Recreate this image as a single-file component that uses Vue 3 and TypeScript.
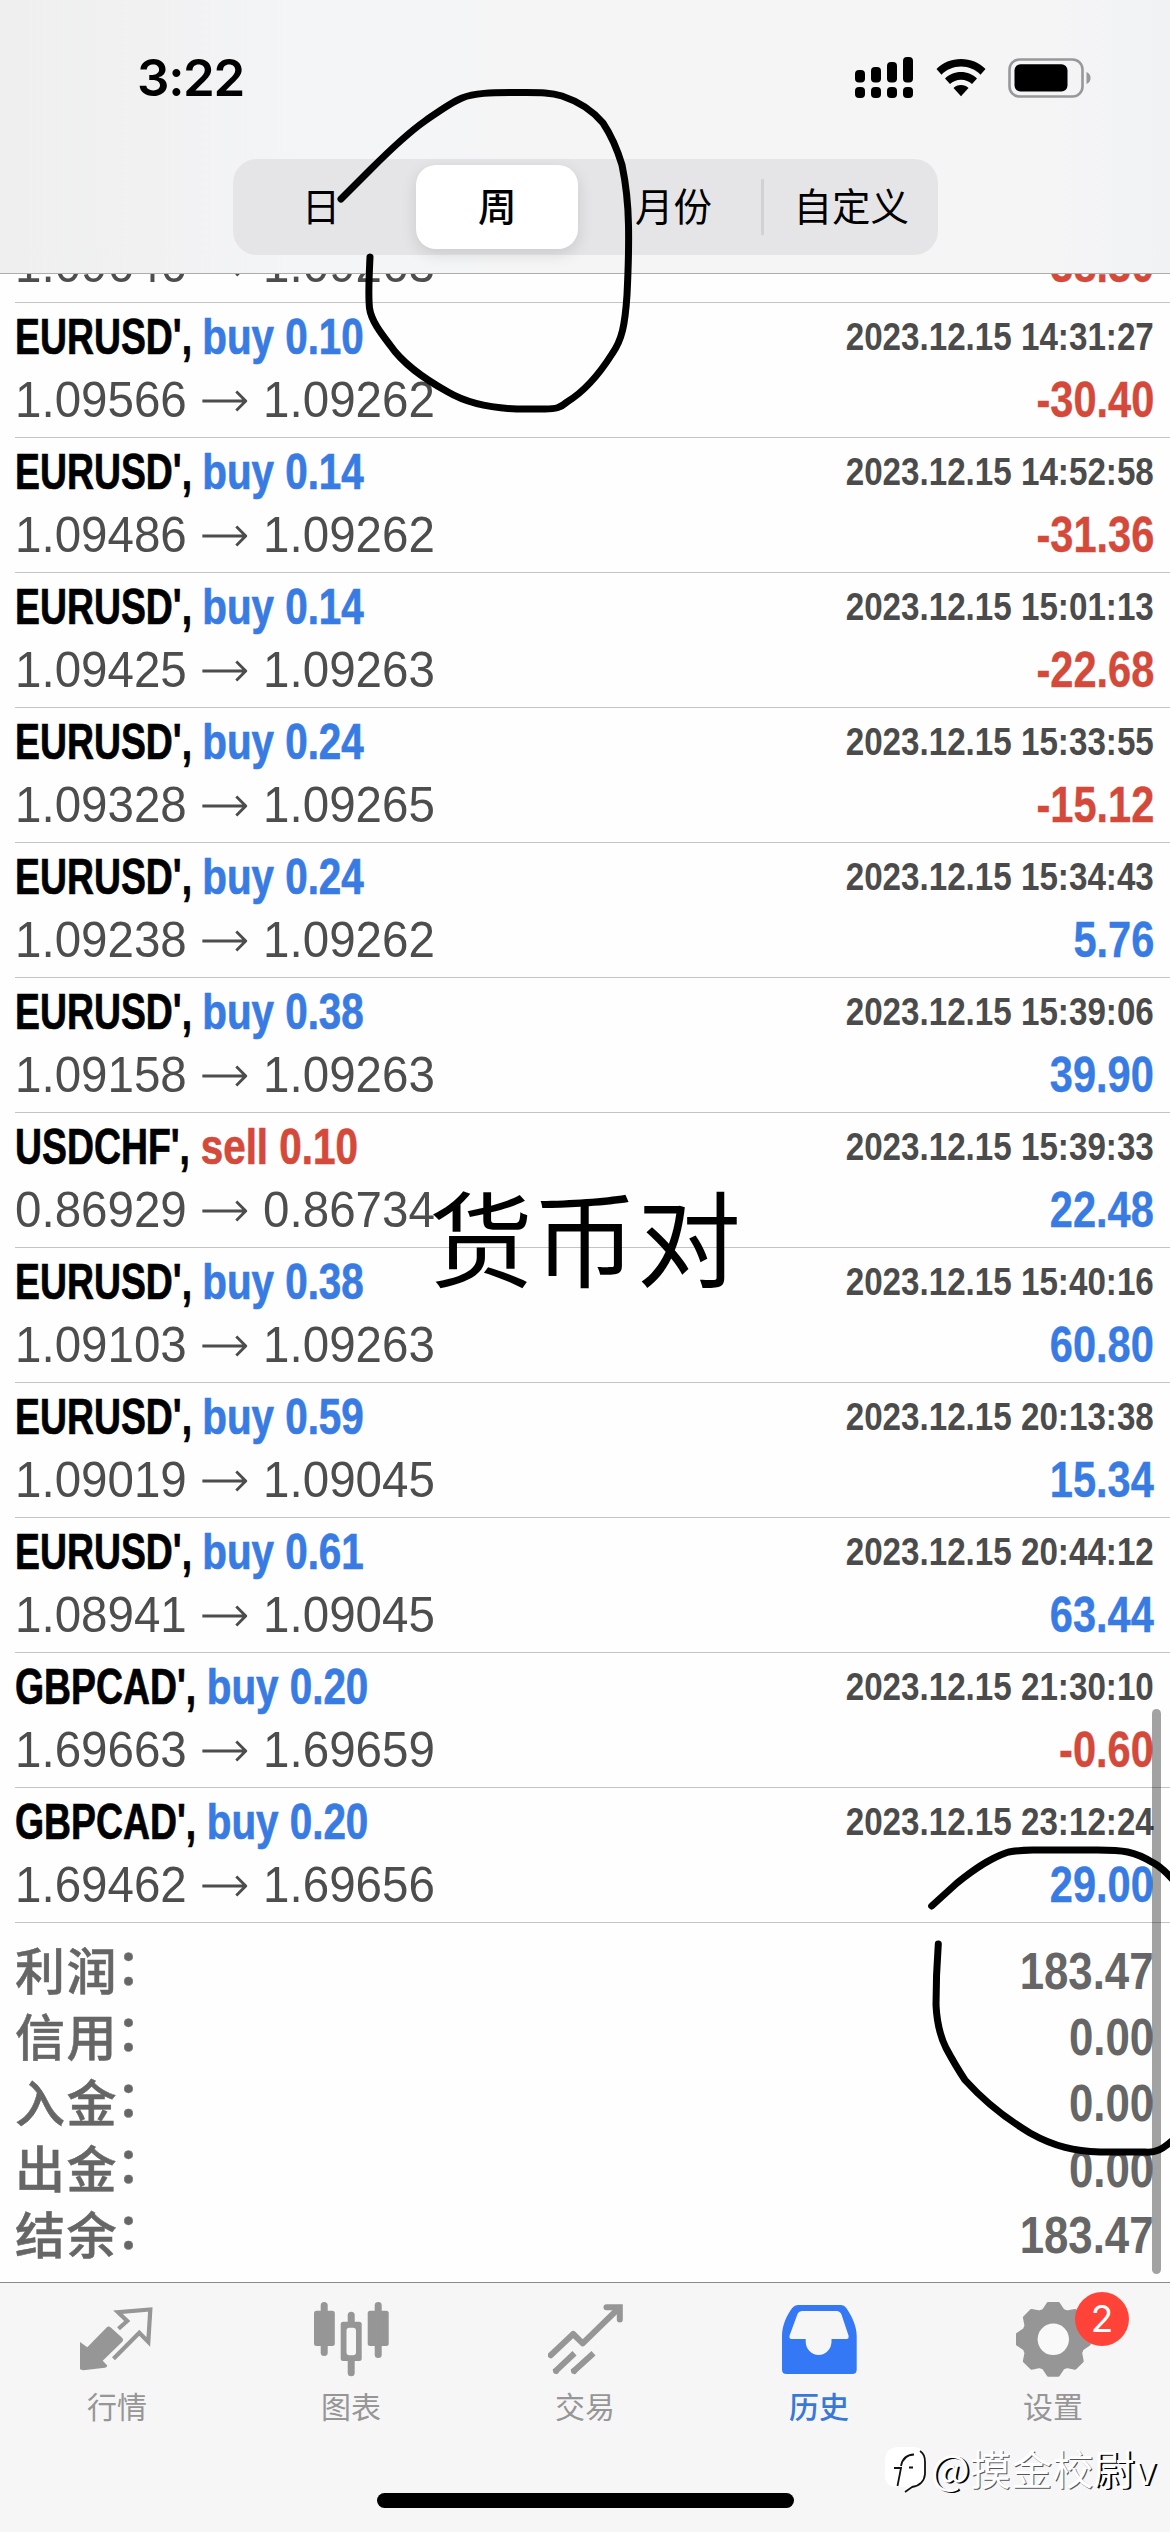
<script setup lang="ts">
interface Deal {
  symbol: string
  side: 'buy' | 'sell'
  lots: string
  open: string
  close: string
  time: string
  profit: string
}

const deal = (
  symbol: string,
  side: 'buy' | 'sell',
  lots: string,
  open: string,
  close: string,
  time: string,
  profit: string,
): Deal => ({ symbol, side, lots, open, close, time: `2023.12.15 ${time}`, profit })

// The row scrolled halfway under the header: only its price line is in view
const scrolledDeal = { open: '1.09646', close: '1.09263', profit: '-38.30' }

const deals: Deal[] = [
  deal("EURUSD'", 'buy', '0.10', '1.09566', '1.09262', '14:31:27', '-30.40'),
  deal("EURUSD'", 'buy', '0.14', '1.09486', '1.09262', '14:52:58', '-31.36'),
  deal("EURUSD'", 'buy', '0.14', '1.09425', '1.09263', '15:01:13', '-22.68'),
  deal("EURUSD'", 'buy', '0.24', '1.09328', '1.09265', '15:33:55', '-15.12'),
  deal("EURUSD'", 'buy', '0.24', '1.09238', '1.09262', '15:34:43', '5.76'),
  deal("EURUSD'", 'buy', '0.38', '1.09158', '1.09263', '15:39:06', '39.90'),
  deal("USDCHF'", 'sell', '0.10', '0.86929', '0.86734', '15:39:33', '22.48'),
  deal("EURUSD'", 'buy', '0.38', '1.09103', '1.09263', '15:40:16', '60.80'),
  deal("EURUSD'", 'buy', '0.59', '1.09019', '1.09045', '20:13:38', '15.34'),
  deal("EURUSD'", 'buy', '0.61', '1.08941', '1.09045', '20:44:12', '63.44'),
  deal("GBPCAD'", 'buy', '0.20', '1.69663', '1.69659', '21:30:10', '-0.60'),
  deal("GBPCAD'", 'buy', '0.20', '1.69462', '1.69656', '23:12:24', '29.00'),
]

const totals = [
  { label: '利润', value: '183.47' },
  { label: '信用', value: '0.00' },
  { label: '入金', value: '0.00' },
  { label: '出金', value: '0.00' },
  { label: '结余', value: '183.47' },
]

const isLoss = (d: Deal): boolean => d.profit.startsWith('-')

// Eight-toothed gear outline around (37.3, 37.3)
const gearPoints: string = Array.from({ length: 8 }, (_, i) => i * 45)
  .flatMap((a) => [
    [a - 18.5, 30.5],
    [a - 8, 36.2],
    [a + 8, 36.2],
    [a + 18.5, 30.5],
  ])
  .map(([deg, r]) => {
    const t = (deg * Math.PI) / 180
    return `${(37.3 + r * Math.sin(t)).toFixed(2)},${(37.3 - r * Math.cos(t)).toFixed(2)}`
  })
  .join(' ')
</script>

<template>
  <div class="screen">
    <header class="header">
      <div class="status">
        <span class="clock">3:22</span>
        <div class="status-icons">
          <svg class="signal" width="58" height="42" viewBox="0 0 58 42">
            <rect x="0" y="13" width="10" height="12.5" rx="4" />
            <rect x="16" y="10" width="10" height="15.5" rx="4" />
            <rect x="32" y="5" width="10" height="20.5" rx="4" />
            <rect x="48" y="0" width="10" height="25.5" rx="4" />
            <rect v-for="x in [0, 16, 32, 48]" :key="x" :x="x" y="30" width="10" height="11" rx="4" />
          </svg>
          <svg class="wifi" width="50" height="38" viewBox="0 0 50 38">
            <path d="M25 0C34.5 0 43.300 3.600 49.500 10L44.500 15.700C39.500 10.600 32.500 7.600 25 7.600S10.500 10.600 5.500 15.700L.5 10C6.700 3.600 15.500 0 25 0Z" />
            <path d="M25 13C31.300 13 37 15.500 41 19.500L36 25C33.200 22.300 29.300 20.700 25 20.700S16.800 22.300 14 25L9 19.500C13 15.500 18.700 13 25 13Z" />
            <path d="M25 26C28 26 30.700 27.100 32.500 29L25 37.200L17.500 29C19.300 27.100 22 26 25 26Z" />
          </svg>
          <svg class="battery" width="83" height="40" viewBox="0 0 83 40">
            <rect x="1.500" y="1.500" width="73" height="37" rx="10" fill="none" stroke="#98989a" stroke-width="2.600" />
            <rect x="6.500" y="6.300" width="53" height="27.200" rx="6" />
            <path d="M78.500 14C81.300 15.200 82.600 17.500 82.600 20S81.300 24.800 78.500 26Z" fill="#98989a" />
          </svg>
        </div>
      </div>
      <nav class="segments">
        <span class="segment">日</span>
        <span class="segment active"><b>周</b></span>
        <span class="segment">月份</span>
        <span class="segment divided">自定义</span>
      </nav>
    </header>

    <main class="history">
      <section class="deal scrolled">
        <div class="line bottom">
          <div class="prices">
            <span>{{ scrolledDeal.open }}</span>
            <svg class="arrow" width="47" height="22" viewBox="0 0 47 22">
              <path d="M0 11H45M35.500 1.500L45.300 11L35.500 20.500" />
            </svg>
            <span>{{ scrolledDeal.close }}</span>
          </div>
          <div class="profit loss">{{ scrolledDeal.profit }}</div>
        </div>
      </section>
      <section v-for="d in deals" :key="d.time" class="deal">
        <div class="line top">
          <div class="title">
            <span>{{ d.symbol }}, </span><span class="order" :class="d.side">{{ d.side }} {{ d.lots }}</span>
          </div>
          <div class="time">{{ d.time }}</div>
        </div>
        <div class="line bottom">
          <div class="prices">
            <span>{{ d.open }}</span>
            <svg class="arrow" width="47" height="22" viewBox="0 0 47 22">
              <path d="M0 11H45M35.500 1.500L45.300 11L35.500 20.500" />
            </svg>
            <span>{{ d.close }}</span>
          </div>
          <div class="profit" :class="{ loss: isLoss(d) }">{{ d.profit }}</div>
        </div>
      </section>
      <section class="totals">
        <div v-for="t in totals" :key="t.label" class="total">
          <span class="total-label">{{ t.label }}<i>：</i></span>
          <span class="total-value">{{ t.value }}</span>
        </div>
      </section>
    </main>

    <footer class="tabbar">
      <div class="tab">
        <svg width="75" height="75" viewBox="0 0 75 75">
          <path d="M0 40L7.300 45.300L26.600 25.500Q28.700 23.400 30.800 25.500L42.300 36Q44 38 42.300 39.800L22.700 58.700L27.300 63.500Q27 65.500 25 65.800L3.300 68.300L0 67.300Z" />
          <path class="stroke" stroke-width="4.200" d="M38.500 26.800L47.200 19L38 10.200L70.300 7.500L68.300 40L59.300 30.800L33.500 56.800" />
        </svg>
        <span>行情</span>
      </div>
      <div class="tab">
        <svg width="75" height="75" viewBox="0 0 75 75">
          <rect x="0" y="8.700" width="20.800" height="35.300" rx="2.500" />
          <rect x="6.700" y="0" width="7" height="54" rx="3.500" />
          <rect x="33.700" y="9.700" width="7" height="64.600" rx="3.500" />
          <rect x="26.700" y="19.700" width="21" height="39.300" rx="2.500" />
          <rect x="32.500" y="25.700" width="9.500" height="27.600" rx="3" fill="#f6f6f6" />
          <rect x="53.700" y="8.700" width="21" height="35.300" rx="2.500" />
          <rect x="60.700" y="0" width="7" height="56" rx="3.500" />
        </svg>
        <span>图表</span>
      </div>
      <div class="tab">
        <svg width="75" height="75" viewBox="0 0 75 75">
          <g class="stroke" stroke-width="6">
            <path stroke-linecap="round" stroke-linejoin="round" d="M2.700 53.300L25.200 32L34.700 41.300L71 6" />
            <path stroke-linecap="round" d="M58.500 5.200H71.800V17.500" />
            <path d="M6.500 70.200L26.500 51.200M24.500 70.200L45.500 51.200" />
          </g>
          <circle cx="8" cy="69" r="3" /><circle cx="26" cy="69" r="3" />
        </svg>
        <span>交易</span>
      </div>
      <div class="tab selected">
        <svg width="75" height="75" viewBox="0 0 75 75">
          <path
            fill-rule="evenodd"
            d="M16 3H59Q62.300 3 64.300 6C69 13 74.700 23 74.700 34V67.500Q74.700 72 70.200 72H4.500Q0 72 0 67.500V34C0 23 5 13 10.200 6Q12.500 3 16 3ZM20.500 9Q17 9 15.500 12L7.600 33.500Q6.800 37 9.700 37H23.700V39.500A12.900 13.500 0 0 0 49.500 39.500V37H64.500Q67.200 37 66.500 33.500L59.500 12.500Q58 9 54.500 9Z"
          />
        </svg>
        <span>历史</span>
      </div>
      <div class="tab">
        <svg width="75" height="75" viewBox="0 0 75 75">
          <polygon :points="gearPoints" stroke="#969696" stroke-width="3" stroke-linejoin="round" />
          <circle cx="37.300" cy="37.300" r="15.700" fill="#f9f9f9" />
        </svg>
        <span>设置</span>
        <em class="badge">2</em>
      </div>
    </footer>

    <div class="scroll-thumb"></div>
    <div class="home-indicator"></div>
    <div class="note">货币对</div>

    <div class="watermark">
      <svg width="42" height="50" viewBox="0 0 42 50">
        <path fill="#fff" d="M12 2H30Q40 3 40 14V27Q40 39 29 40L19 47L21 42H12Q0 42 0 30V14Q1 3 12 2Z" />
        <g fill="none" stroke="#111" stroke-width="1.800">
          <path d="M35 6Q40 9 40 17V29Q39 40 27 42L20 47" />
          <path d="M12.500 41L16 23H9M16 21Q18 10 29 9.500M24 22.500H28" />
        </g>
      </svg>
      <span><b>@</b>摸金校<b>尉v</b></span>
    </div>

    <svg class="ink" width="1170" height="2532" viewBox="0 0 1170 2532">
      <path d="M341 199L370 170C387 153 405 135 425 121C438 112 450 103 462 98C474 93 490 92.500 517 92.500C538 92.500 550 92 562 96C580 102 593 111 603 123C613 138 619 155 622 165C626 184 628 198 628.500 225C629 250 628 275 627 295C625 325 622 340 612 354C600 373 585 391 567 402C560 408 556 409 545 409H517C490 408 465 402 448 392C423 378 403 364 390 345C380 332 371 320 369.500 308C368 294 369 280 370 257" />
      <path d="M931.700 1906L957 1883C972 1871 988 1859 1007 1852.500Q1014 1850.500 1033 1850H1097C1123 1850 1134 1851 1153 1862.700C1161 1867 1167 1873 1174 1881" />
      <path d="M938.300 1944C936 1975 936 1990 936 2005C937 2025 940 2036 946 2048C953 2061 959 2071 965 2080C983 2100 1005 2118 1030 2133C1055 2147 1075 2151 1100 2152H1145C1155 2153 1162 2150 1174 2139" />
    </svg>
  </div>
</template>

<style>
body {
  margin: 0;
  background: #fefefe;
}
</style>

<style scoped>
.screen {
  position: relative;
  display: flex;
  flex-direction: column;
  width: 1170px;
  height: 2532px;
  overflow: hidden;
  background: #fefefe;
  font-family: 'Liberation Sans', 'Noto Sans CJK SC', sans-serif;
}

.header {
  box-sizing: border-box;
  flex: none;
  height: 274px;
  border-bottom: 1px solid #adadad;
  background: linear-gradient(90deg, #eeefee 0, #f1f1f2 150px, #f4f5f7 300px, #f5f5f5 650px, #f5f5f6 1040px, #f1f2f4 1170px);
}

.status {
  display: flex;
  justify-content: space-between;
  height: 159px;
}

.clock {
  margin: 47px 0 0 137px;
  font: 600 51px/62px Inter, sans-serif;
  letter-spacing: -1.3px;
}

.status-icons {
  display: flex;
  align-items: flex-start;
  margin: 57px 79px 0 0;
}

.wifi {
  margin: 2px 22px 0 23px;
}

.battery {
  margin-top: 1px;
}

.segments {
  display: grid;
  grid-template-columns: repeat(4, 1fr);
  width: 705px;
  height: 96px;
  margin-left: 233px;
  border-radius: 24px;
  background: #e5e5e7;
}

.segment {
  box-sizing: border-box;
  display: flex;
  align-items: center;
  justify-content: center;
  padding-bottom: 5px;
  font: 400 38.5px/1 'Noto Sans CJK SC', sans-serif;
}

.segment.active {
  padding-bottom: 0;
}

.segment.active b {
  box-sizing: border-box;
  display: flex;
  align-items: center;
  justify-content: center;
  width: 162px;
  height: 84px;
  padding-bottom: 5px;
  border-radius: 20px;
  background: #fff;
  box-shadow: 0 5px 16px rgba(0, 0, 0, 0.12);
  font-weight: 500;
}

.segment.divided::before {
  content: '';
  width: 3px;
  height: 56px;
  margin: 5px 30px 0 -30px;
  background: #d2d2d5;
}

.history {
  display: flex;
  flex: none;
  flex-direction: column;
  justify-content: flex-end;
  height: 2008px;
  overflow: hidden;
}

.deal {
  box-sizing: border-box;
  flex: none;
  height: 135px;
  margin-left: 15px;
  padding: 6px 16px 0 0;
  border-bottom: 1px solid #c4c4c6;
}

.deal.scrolled {
  height: 73px;
  padding-top: 0;
}

.line {
  display: flex;
  justify-content: space-between;
  white-space: pre;
}

.top {
  line-height: 56px;
}

.bottom {
  line-height: 70px;
}

.title {
  font-size: 49.5px;
  font-weight: 700;
  transform: scaleX(0.755);
  transform-origin: left;
  -webkit-text-stroke: 0.7px currentColor;
}

.order {
  display: inline-block;
  transform: scaleX(1.08);
  transform-origin: left;
}

.buy {
  color: #387be3;
}

.sell {
  color: #d4493a;
}

.time {
  color: #4b4b4b;
  font-size: 39.5px;
  font-weight: 700;
  line-height: 54px;
  transform: scaleX(0.84);
  transform-origin: right;
}

.prices {
  display: flex;
  align-items: center;
  color: #4d4d4d;
  font-size: 49.5px;
  transform: scaleX(0.96);
  transform-origin: left;
}

.arrow {
  margin: 1px 16.5px 0 16px;
  fill: none;
  stroke: #4d4d4d;
  stroke-width: 3px;
}

.profit {
  color: #387be3;
  font-size: 49.5px;
  font-weight: 700;
  transform: scaleX(0.84);
  transform-origin: right;
  -webkit-text-stroke: 0.4px currentColor;
}

.profit.loss {
  color: #d4493a;
}

.totals {
  flex: none;
  padding: 15px 16px 14px 15px;
}

.total {
  display: flex;
  justify-content: space-between;
  height: 66px;
  color: #666;
  line-height: 66px;
}

.total-label {
  font-family: 'Noto Sans CJK SC', sans-serif;
  font-size: 50px;
  font-weight: 500;
  letter-spacing: 1.5px;
  line-height: 60px;
  -webkit-text-stroke: 0.5px currentColor;
}

.total-label i {
  display: inline-block;
  font-style: normal;
  transform: translate(-2px, -5px);
}

.total-value {
  font-size: 52.5px;
  font-weight: 700;
  transform: scaleX(0.834);
  transform-origin: right;
}

.tabbar {
  box-sizing: border-box;
  display: grid;
  flex: none;
  grid-template-columns: repeat(5, 1fr);
  height: 250px;
  border-top: 1px solid #8a8a8c;
  background: #f6f6f6;
}

.tab {
  position: relative;
  display: flex;
  flex-direction: column;
  align-items: center;
  padding-top: 19px;
  color: #969696;
  font: 400 30px/44px 'Noto Sans CJK SC', sans-serif;
}

.tab svg {
  display: block;
  margin-bottom: 6px;
  fill: currentColor;
}

.tab .stroke {
  fill: none;
  stroke: currentColor;
}

.tab.selected {
  color: #3478f6;
}

.tab.selected span {
  font-weight: 500;
  color: #3a78d8;
}

.badge {
  position: absolute;
  top: 9px;
  left: 139px;
  width: 54px;
  height: 54px;
  border-radius: 50%;
  background: #ff4338;
  color: #fff;
  font: 400 37px/54px Inter, sans-serif;
  text-align: center;
}

.scroll-thumb {
  position: absolute;
  top: 1709px;
  left: 1152px;
  width: 9px;
  height: 565px;
  border-radius: 5px;
  background: rgba(0, 0, 0, 0.36);
}

.home-indicator {
  position: absolute;
  top: 2493px;
  left: 377px;
  width: 417px;
  height: 15px;
  border-radius: 8px;
  background: #000;
}

.note {
  position: absolute;
  top: 1183px;
  left: 429px;
  font: 400 104px/104px 'Noto Sans CJK SC', sans-serif;
  white-space: nowrap;
}

.watermark {
  position: absolute;
  top: 2445px;
  left: 885px;
  display: flex;
  color: #fff;
  font: 400 41px/44px 'Noto Sans CJK SC', sans-serif;
  white-space: nowrap;
}

.watermark span {
  margin-left: 4px;
  letter-spacing: 0.2px;
  text-shadow: 1px 1px 0 #555;
}

.watermark b {
  font-weight: 400;
  text-shadow: 2px 1px 0 #000;
}

.ink {
  position: absolute;
  top: 0;
  left: 0;
  fill: none;
  stroke: #000;
  stroke-width: 7px;
  stroke-linecap: round;
  stroke-linejoin: round;
}
</style>
